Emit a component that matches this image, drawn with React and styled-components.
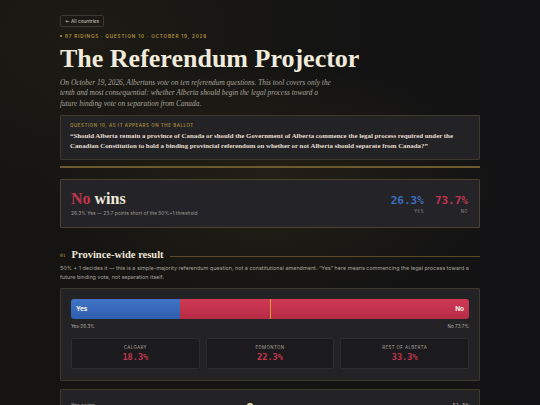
import React from "react";
import styled, { createGlobalStyle } from "styled-components";

const GlobalStyle = createGlobalStyle`
  html, body {
    margin: 0;
    padding: 0;
    background: #141414;
  }
  body {
    font-family: Inter, "Noto Sans", sans-serif;
    color: #e9e4d8;
    -webkit-font-smoothing: antialiased;
  }
`;

const SERIF = `"Liberation Serif", "DejaVu Serif", serif`;
const SANS = `Inter, "Noto Sans", sans-serif`;
const MONO = `"DejaVu Sans Mono", "Liberation Mono", monospace`;

const Page = styled.div`
  min-height: 405px;
  background:
    radial-gradient(ellipse 320px 170px at 270px 185px, rgba(120, 92, 30, 0.16), transparent 70%),
    radial-gradient(ellipse 300px 220px at 90px 40px, rgba(70, 58, 30, 0.18), transparent 75%),
    linear-gradient(90deg, #151412 0%, #141413 50%, #131315 100%);
  overflow: hidden;
`;

const Container = styled.main`
  width: 420px;
  margin: 0 auto;
  padding-top: 15px;
  display: flex;
  flex-direction: column;
`;

const BackButton = styled.button`
  align-self: flex-start;
  display: inline-flex;
  align-items: center;
  gap: 2px;
  height: 12px;
  padding: 0 4px;
  border: 1px solid #3b3832;
  border-radius: 2px;
  background: transparent;
  color: #d2cdc2;
  font-family: ${SANS};
  font-size: 4.8px;
  cursor: pointer;
`;

const Meta = styled.div`
  margin-top: 5px;
  display: flex;
  align-items: center;
  gap: 3px;
  height: 8px;
  font-family: ${SANS};
  font-size: 4.6px;
  font-weight: 600;
  letter-spacing: 0.85px;
  color: #b8933f;
`;

const Dot = styled.span`
  width: 2px;
  height: 2px;
  border-radius: 50%;
  background: #c9a24a;
`;

const Title = styled.h1`
  margin: 4px 0 0;
  font-family: ${SERIF};
  font-weight: 700;
  font-size: 26px;
  line-height: 30px;
  color: #f1ebdc;
`;

const Lede = styled.p`
  margin: 4px 0 0;
  max-width: 276px;
  font-family: ${SERIF};
  font-style: italic;
  font-size: 7.4px;
  line-height: 10.4px;
  color: #a8a39b;
`;

const Panel = styled.section`
  box-sizing: border-box;
  background: ${(p) => p.$bg || "#232326"};
  border: 1px solid ${(p) => p.$border || "#3d382c"};
  border-radius: 1px;
`;

const Ballot = styled(Panel)`
  margin-top: 6px;
  padding: 7px 9px 8px;
`;

const Eyebrow = styled.div`
  font-family: ${SANS};
  font-size: 4.4px;
  font-weight: 600;
  letter-spacing: 0.6px;
  color: #a3843a;
`;

const Quote = styled.p`
  margin: 3px 0 0;
  font-family: ${SERIF};
  font-weight: 700;
  font-size: 6.85px;
  line-height: 9.8px;
  color: #e4ded2;
`;

const GoldRule = styled.div`
  margin-top: 6px;
  height: 2px;
  background: #6c5a2c;
`;

const Verdict = styled(Panel)`
  margin-top: 11px;
  height: 49px;
  padding: 0 11px 0 10px;
  display: flex;
  align-items: center;
  justify-content: space-between;
  border-color: #4a422f;
  background: #242428;
`;

const VerdictText = styled.div`
  display: flex;
  flex-direction: column;
  gap: 3px;
`;

const Headline = styled.h2`
  margin: 0;
  font-family: ${SERIF};
  font-weight: 700;
  font-size: 16px;
  line-height: 16px;
  color: #f1ebdc;
`;

const Accent = styled.span`
  color: ${(p) => p.$color};
`;

const Small = styled.div`
  font-family: ${SANS};
  font-size: 4.9px;
  color: #9b978f;
`;

const Figures = styled.div`
  display: flex;
  gap: 11px;
  margin-top: 3px;
`;

const Figure = styled.div`
  display: flex;
  flex-direction: column;
  align-items: flex-end;
  gap: 2px;
`;

const BigNumber = styled.div`
  font-family: ${MONO};
  font-size: 11px;
  line-height: 12px;
  font-weight: 700;
  color: ${(p) => p.$color};
`;

const TinyLabel = styled.div`
  font-family: ${SANS};
  font-size: 4.2px;
  letter-spacing: 0.5px;
  color: #8d8a84;
`;

const SectionHead = styled.div`
  margin-top: 21px;
  display: flex;
  align-items: center;
  gap: 6px;
`;

const SectionNum = styled.span`
  font-family: ${MONO};
  font-size: 4.6px;
  color: #b0903f;
  padding-top: 2px;
`;

const SectionTitle = styled.h3`
  margin: 0;
  font-family: ${SERIF};
  font-weight: 700;
  font-size: 10.5px;
  line-height: 12px;
  color: #ece6d8;
`;

const SectionLine = styled.span`
  flex: 1;
  height: 1px;
  margin-top: 3px;
  background: #5a4a26;
`;

const Body = styled.p`
  margin: 3px 0 0;
  font-family: ${SANS};
  font-size: 5.45px;
  line-height: 9px;
  color: #a7a39b;
`;

const BarCard = styled(Panel)`
  margin-top: 6px;
  padding: 10px 10px 11px;
  display: flex;
  flex-direction: column;
`;

const Bar = styled.div`
  position: relative;
  display: flex;
  height: 20px;
  border-radius: 3px;
  overflow: hidden;
`;

const Segment = styled.div`
  display: flex;
  align-items: center;
  justify-content: ${(p) => (p.$end ? "flex-end" : "flex-start")};
  padding: 0 5px;
  background: ${(p) => p.$bg};
  color: #f6f1e6;
  font-family: ${SANS};
  font-weight: 700;
  font-size: 6.4px;
`;

const Threshold = styled.span`
  position: absolute;
  left: 50%;
  top: 0;
  bottom: 0;
  width: 1px;
  background: #d99a3a;
`;

const BarLegend = styled.div`
  margin-top: 4px;
  display: flex;
  justify-content: space-between;
  font-family: ${SANS};
  font-size: 4.7px;
  color: #b1ada5;
`;

const Regions = styled.div`
  margin-top: 9px;
  display: grid;
  grid-template-columns: repeat(3, 1fr);
  gap: 6px;
`;

const Region = styled.div`
  height: 31px;
  box-sizing: border-box;
  background: #1b1b1e;
  border: 1px solid #2d2d31;
  border-radius: 2px;
  display: flex;
  flex-direction: column;
  align-items: center;
  justify-content: center;
  gap: 3px;
`;

const RegionName = styled.div`
  font-family: ${SANS};
  font-size: 4.4px;
  letter-spacing: 0.4px;
  color: #a6a29b;
`;

const RegionValue = styled.div`
  font-family: ${MONO};
  font-size: 8.6px;
  line-height: 9px;
  font-weight: 700;
  color: #c4344d;
`;

const SliderCard = styled(Panel)`
  margin-top: 8px;
  height: 40px;
  padding: 12px 10px 0;
  display: flex;
  align-items: flex-start;
  gap: 10px;
`;

const SliderLabel = styled.span`
  font-family: ${SANS};
  font-size: 5px;
  color: #b0aca4;
  width: 60px;
`;

const Track = styled.div`
  position: relative;
  flex: 1;
  height: 2px;
  margin-top: 4px;
  background: #3a3a3f;
  border-radius: 1px;
`;

const Thumb = styled.span`
  position: absolute;
  top: -3px;
  width: 7px;
  height: 7px;
  border-radius: 50%;
  background: #e8d9a8;
  transform: translateX(-50%);
`;

const SliderValue = styled.span`
  font-family: ${MONO};
  font-size: 5.5px;
  color: #b0aca4;
`;

const yes = 26.3;
const no = 73.7;
const swing = 36;

const regions = [
  { name: "CALGARY", value: "18.3%" },
  { name: "EDMONTON", value: "22.3%" },
  { name: "REST OF ALBERTA", value: "33.3%" },
];

export default function App() {
  return (
    <>
      <GlobalStyle />
      <Page>
        <Container>
          <BackButton>← All countries</BackButton>
          <Meta>
            <Dot />
            87 RIDINGS · QUESTION 10 · OCTOBER 19, 2026
          </Meta>
          <Title>The Referendum Projector</Title>
          <Lede>
            On October 19, 2026, Albertans vote on ten referendum questions. This tool covers only the
            tenth and most consequential: whether Alberta should begin the legal process toward a future
            binding vote on separation from Canada.
          </Lede>

          <Ballot>
            <Eyebrow>QUESTION 10, AS IT APPEARS ON THE BALLOT</Eyebrow>
            <Quote>
              “Should Alberta remain a province of Canada or should the Government of Alberta commence the
              legal process required under the Canadian Constitution to hold a binding provincial
              referendum on whether or not Alberta should separate from Canada?”
            </Quote>
          </Ballot>

          <GoldRule />

          <Verdict>
            <VerdictText>
              <Headline>
                <Accent $color="#c3344c">No</Accent> wins
              </Headline>
              <Small>26.3% Yes — 23.7 points short of the 50%+1 threshold</Small>
            </VerdictText>
            <Figures>
              <Figure>
                <BigNumber $color="#3d6dbd">26.3%</BigNumber>
                <TinyLabel>YES</TinyLabel>
              </Figure>
              <Figure>
                <BigNumber $color="#c3344c">73.7%</BigNumber>
                <TinyLabel>NO</TinyLabel>
              </Figure>
            </Figures>
          </Verdict>

          <SectionHead>
            <SectionNum>01</SectionNum>
            <SectionTitle>Province-wide result</SectionTitle>
            <SectionLine />
          </SectionHead>
          <Body>
            50% + 1 decides it — this is a simple-majority referendum question, not a constitutional
            amendment. “Yes” here means commencing the legal process toward a future binding vote, not
            separation itself.
          </Body>

          <BarCard>
            <Bar>
              <Segment
                style={{ width: `${yes}%` }}
                $bg="linear-gradient(180deg, #3f73c6 0%, #2f5fae 100%)"
              >
                Yes
              </Segment>
              <Segment
                style={{ width: `${no}%` }}
                $end
                $bg="linear-gradient(180deg, #d03a55 0%, #b72b45 100%)"
              >
                No
              </Segment>
              <Threshold />
            </Bar>
            <BarLegend>
              <span>Yes 26.3%</span>
              <span>No 73.7%</span>
            </BarLegend>
            <Regions>
              {regions.map((r) => (
                <Region key={r.name}>
                  <RegionName>{r.name}</RegionName>
                  <RegionValue>{r.value}</RegionValue>
                </Region>
              ))}
            </Regions>
          </BarCard>

          <SliderCard>
            <SliderLabel>Yes swing</SliderLabel>
            <Track>
              <Thumb style={{ left: `${swing}%` }} />
            </Track>
            <SliderValue>51.5%</SliderValue>
          </SliderCard>
        </Container>
      </Page>
    </>
  );
}
